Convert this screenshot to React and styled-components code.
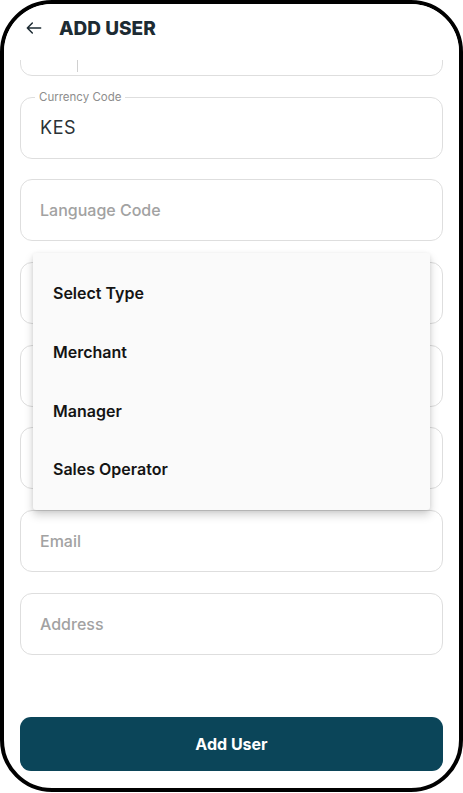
import React from "react";
import styled, { createGlobalStyle } from "styled-components";

const GlobalStyle = createGlobalStyle`
  html, body {
    margin: 0;
    padding: 0;
    background: #ffffff;
  }
  body {
    font-family: "Inter", "Lato", "Noto Sans", sans-serif;
  }
  * { box-sizing: border-box; }
`;

// fields under the open menu show nothing in the screenshot
const fields = [
  { id: "phone", kind: "phone" },
  { id: "currency", label: "Currency Code", value: "KES" },
  { id: "language", placeholder: "Language Code" },
  { id: "type" },
  { id: "first" },
  { id: "last" },
  { id: "email", placeholder: "Email" },
  { id: "address", placeholder: "Address" },
];

const menuOptions = ["Select Type", "Merchant", "Manager", "Sales Operator"];

export default function App() {
  return (
    <>
      <GlobalStyle />
      <Frame>
        <Header>
          <BackArrow viewBox="0 0 24 24">
            <path d="M20 12H4M10 6l-6 6 6 6" />
          </BackArrow>
          <Title>ADD USER</Title>
        </Header>

        <ScrollArea>
          <FieldList $offset={46}>
            {fields.map((f) => (
              <Field key={f.id}>
                {f.kind === "phone" && (
                  <>
                    <PhoneCode />
                    <Divider />
                  </>
                )}
                {f.label && <FloatLabel>{f.label}</FloatLabel>}
                {f.value && <Value>{f.value}</Value>}
                {f.placeholder && <Placeholder>{f.placeholder}</Placeholder>}
              </Field>
            ))}
          </FieldList>

          <Menu>
            {menuOptions.map((o) => (
              <MenuItem key={o}>{o}</MenuItem>
            ))}
          </Menu>
        </ScrollArea>

        <Footer>
          <SubmitButton>Add User</SubmitButton>
        </Footer>
      </Frame>
    </>
  );
}

const Frame = styled.div`
  width: 463px;
  height: 792px;
  border: 4px solid #000;
  border-radius: 52px;
  background: #fff;
  display: flex;
  flex-direction: column;
  overflow: hidden;
`;

const Header = styled.div`
  height: 56px;
  flex-shrink: 0;
  display: flex;
  align-items: center;
  gap: 15px;
  padding: 0 0 8px 20px;
  background: #fff;
  position: relative;
  z-index: 2;
`;

const BackArrow = styled.svg`
  width: 20px;
  height: 20px;
  fill: none;
  stroke: #1d2b33;
  stroke-width: 1.8;
  stroke-linecap: round;
  stroke-linejoin: round;
`;

const Title = styled.h1`
  margin: 0;
  font-size: 19px;
  font-weight: 800;
  color: #1d2b33;
`;

const ScrollArea = styled.div`
  flex: 1;
  position: relative;
  overflow: hidden;
`;

const FieldList = styled.div`
  display: flex;
  flex-direction: column;
  gap: 20.67px;
  padding: 0 16px;
  margin-top: -${(p) => p.$offset}px;
`;

const Field = styled.div`
  position: relative;
  height: 62px;
  flex-shrink: 0;
  border: 1px solid #dedede;
  border-radius: 12px;
  display: flex;
  align-items: center;
  padding: 0 19px;
`;

const PhoneCode = styled.div`
  width: 37px;
`;

const Divider = styled.div`
  width: 1px;
  align-self: stretch;
  margin: 4px 0 3px;
  background: #d0d0d0;
`;

const FloatLabel = styled.span`
  position: absolute;
  top: -8px;
  left: 14px;
  padding: 0 4px;
  background: #fff;
  font-size: 11.5px;
  color: #8d8d8d;
`;

const Value = styled.span`
  font-size: 18px;
  color: #2a3236;
  letter-spacing: 0.6px;
`;

const Placeholder = styled.span`
  font-size: 16px;
  font-weight: 500;
  color: #a2a2a2;
`;

const Menu = styled.div`
  position: absolute;
  top: 193px;
  left: 29px;
  width: 397px;
  background: #fafafa;
  border-radius: 3px;
  padding: 11px 0 11px;
  box-shadow: 0 5px 10px rgba(0, 0, 0, 0.18), 0 1px 4px rgba(0, 0, 0, 0.08);
  z-index: 3;
`;

const MenuItem = styled.div`
  height: 58.7px;
  display: flex;
  align-items: center;
  padding: 0 20px;
  font-size: 16px;
  font-weight: 600;
  color: #141414;
`;

const Footer = styled.div`
  flex-shrink: 0;
  padding: 12px 16px 17px;
`;

const SubmitButton = styled.button`
  width: 100%;
  height: 54px;
  border: none;
  border-radius: 11px;
  background: #0b4559;
  color: #fff;
  font-family: inherit;
  font-size: 16px;
  font-weight: 700;
  cursor: pointer;
`;
